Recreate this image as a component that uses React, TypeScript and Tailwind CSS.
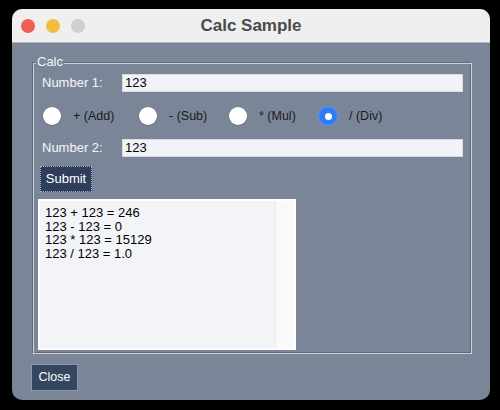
import React from "react";

const font = { fontFamily: '"Liberation Sans", Arial, sans-serif' };

function Radio({ checked, label, width }: { checked?: boolean; label: string; width: number }) {
  return (
    <div className="flex items-center" style={{ width }}>
      {checked ? (
        <div className="w-[18px] h-[18px] rounded-full bg-[#2f7cf6] flex items-center justify-center shadow-[0_0_0_1px_#5b95f5]">
          <div className="w-[7px] h-[7px] rounded-full bg-white" />
        </div>
      ) : (
        <div className="w-[18px] h-[18px] rounded-full bg-white shadow-[0_0.5px_1px_rgba(0,0,0,0.25)]" />
      )}
      <span className="ml-[12px] text-[12.5px] text-[#1a1a1a]">{label}</span>
    </div>
  );
}

export default function App() {
  return (
    <div className="w-[500px] h-[410px] bg-black overflow-hidden" style={font}>
      <div className="ml-[12px] mt-[9px] w-[478px] h-[391px] rounded-[10px] overflow-hidden bg-[#7a8698] flex flex-col">
        <div className="h-[34px] bg-[#efefef] border-b border-[#b3b8c0] flex items-center relative shrink-0">
          <div className="flex items-center gap-[11px] ml-[9px]">
            <div className="w-[14px] h-[14px] rounded-full bg-[#ed5f57]" />
            <div className="w-[14px] h-[14px] rounded-full bg-[#f3bd3e]" />
            <div className="w-[14px] h-[14px] rounded-full bg-[#d0d0d0]" />
          </div>
          <div className="absolute inset-0 flex items-center justify-center text-[17px] font-bold text-[#4b4b4b]">
            Calc Sample
          </div>
        </div>
        <fieldset className="ml-[20px] mt-[12px] w-[440px] border border-t-[#5d6879] border-l-[#5d6879] border-r-[#cdd3dc] border-b-[#cdd3dc] shadow-[inset_1px_1px_0_#cdd3dc,inset_-1px_-1px_0_#5d6879] pb-[3px] flex flex-col">
          <legend className="ml-[3px] px-[1px] text-[13px] leading-[14px] text-[#f4f4f4] bg-[#7a8698]">Calc</legend>
          <div className="flex items-center mt-[5px] h-[18px]">
            <span className="ml-[9px] w-[80px] text-[13px] text-[#f6f6f6]">Number 1:</span>
            <div className="w-[341px] h-[18px] bg-[#f2f3f6] border border-[#d8dce3] text-[13px] leading-[16px] pl-[2px] text-black">123</div>
          </div>
          <div className="flex items-center mt-[15px] h-[18px] ml-[10px]">
            <Radio label="+ (Add)" width={96} />
            <Radio label="- (Sub)" width={90} />
            <Radio label="* (Mul)" width={90} />
            <Radio label="/ (Div)" width={90} checked />
          </div>
          <div className="flex items-center mt-[14px] h-[18px]">
            <span className="ml-[9px] w-[80px] text-[13px] text-[#f6f6f6]">Number 2:</span>
            <div className="w-[341px] h-[18px] bg-[#f2f3f6] border border-[#d8dce3] text-[13px] leading-[16px] pl-[2px] text-black">123</div>
          </div>
          <div className="ml-[7px] mt-[9px] w-[52px] h-[26px] bg-[#2f3e5b] border border-dotted border-[#aab3c2] flex items-center justify-center text-[13px] text-white">
            Submit
          </div>
          <div className="ml-[5px] mt-[7px] w-[258px] h-[151px] bg-white p-[2px] flex">
            <div className="flex-1 bg-[#f3f4f8] pl-[5px] pt-[5px] text-[13px] leading-[13.7px] text-black">
              <div>123 + 123 = 246</div>
              <div>123 - 123 = 0</div>
              <div>123 * 123 = 15129</div>
              <div>123 / 123 = 1.0</div>
            </div>
            <div className="w-[19px] bg-[#f9f9f9] border-l border-[#eaeaea]" />
          </div>
        </fieldset>
        <div className="ml-[19px] mt-[10px] w-[47px] h-[27px] bg-[#34455f] border border-[#8c98aa] flex items-center justify-center text-[12.5px] text-white">
          Close
        </div>
      </div>
    </div>
  );
}
